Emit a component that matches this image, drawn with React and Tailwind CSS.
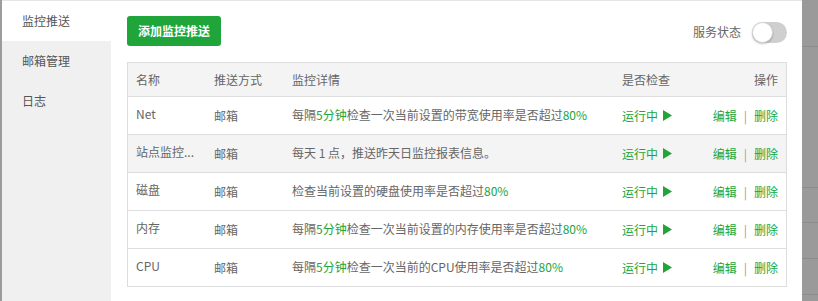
import React, { useState } from "react";

const rows = [
  { name: "Net", detail: [["每隔"], ["5分钟", true], ["检查一次当前设置的带宽使用率是否超过"], ["80%", true]] },
  { name: "站点监控...", detail: [["每天 1 点，推送昨天日监控报表信息。"]], hover: true },
  { name: "磁盘", detail: [["检查当前设置的硬盘使用率是否超过"], ["80%", true]] },
  { name: "内存", detail: [["每隔"], ["5分钟", true], ["检查一次当前设置的内存使用率是否超过"], ["80%", true]] },
  { name: "CPU", detail: [["每隔"], ["5分钟", true], ["检查一次当前的CPU使用率是否超过"], ["80%", true]] },
];

const menu = ["监控推送", "邮箱管理", "日志"];

const Play = () => (
  <svg width="9" height="11" viewBox="0 0 9 11" className="inline-block ml-[5px]">
    <polygon points="0,0 9,5.5 0,11" fill="#20a53a" />
  </svg>
);

const App = () => {
  const [active, setActive] = useState(0);
  const [on, setOn] = useState(false);

  return (
    <div
      className="flex w-[818px] h-[301px] overflow-hidden text-[12px] text-[#666]"
      style={{ fontFamily: '"Noto Sans CJK SC", "Noto Sans", sans-serif' }}
    >
      {/* fondo detras del panel */}
      <div className="w-[2px] bg-[#9c9c9c]" />

      <div className="flex flex-1 bg-white border-t border-[#e6e6e6]">
        {/* menu lateral */}
        <div className="w-[109px] bg-[#f0f0f0] flex flex-col">
          {menu.map((m, i) => (
            <div
              key={m}
              onClick={() => setActive(i)}
              className={
                "h-[40px] flex items-center pl-[20px] text-[#555] cursor-pointer " +
                (i === active ? "bg-white" : "")
              }
            >
              {m}
            </div>
          ))}
        </div>

        {/* contenido */}
        <div className="flex-1 pl-[16px] pr-[15px] pt-[15px]">
          <div className="flex items-center justify-between h-[30px]">
            <button className="h-[30px] px-[11px] bg-[#20a53a] text-white rounded-[3px] font-bold">
              添加监控推送
            </button>
            <div className="flex items-center gap-[11px] mt-[2px]">
              <span className="text-[#666]">服务状态</span>
              <button
                onClick={() => setOn(!on)}
                className={
                  "relative w-[35px] h-[21px] rounded-full " + (on ? "bg-[#20a53a]" : "bg-[#cfcfcf]")
                }
              >
                <span
                  className={
                    "absolute top-[0px] w-[21px] h-[21px] rounded-full bg-white border border-[#d6d6d6] shadow-[0_1px_2px_rgba(0,0,0,0.25)] " +
                    (on ? "right-0" : "left-0")
                  }
                />
              </button>
            </div>
          </div>

          {/* tabla */}
          <div className="mt-[16px] border border-[#dddddd] divide-y divide-[#dddddd]">
            <div className="grid grid-cols-[78px_78px_330px_91px_81px] h-[34px] items-center bg-[#f4f4f4]">
              <div className="pl-[8px]">名称</div>
              <div className="pl-[8px]">推送方式</div>
              <div className="pl-[8px]">监控详情</div>
              <div className="pl-[8px]">是否检查</div>
              <div className="pr-[8px] text-right">操作</div>
            </div>
            {rows.map((r) => (
              <div
                key={r.name}
                className={
                  "grid grid-cols-[78px_78px_330px_91px_81px] h-[38px] last:h-[37px] items-center " +
                  (r.hover ? "bg-[#f4f4f4]" : "")
                }
              >
                <div className="pl-[8px] pb-[3px] truncate">{r.name}</div>
                <div className="pl-[8px]">邮箱</div>
                <div className="pl-[8px] pb-[2px] whitespace-nowrap">
                  {r.detail.map(([t, g], k) => (
                    <span key={k} className={g ? "text-[#20a53a]" : ""}>
                      {t}
                    </span>
                  ))}
                </div>
                <div className="pl-[8px] text-[#20a53a] flex items-center">
                  运行中
                  <Play />
                </div>
                <div className="pr-[8px] flex justify-end items-center text-[#20a53a]">
                  <span>编辑</span>
                  <span className="mx-[7px] text-[#999]">|</span>
                  <span>删除</span>
                </div>
              </div>
            ))}
          </div>
        </div>
      </div>

      {/* fondo derecho */}
      <div className="w-[16px] bg-[#9a9a9a] flex flex-col">
        <div className="h-[47px] border-b border-[#8c8c8c]" />
        <div className="h-[141px] border-b border-[#8c8c8c]" />
        <div className="h-[35px] border-b border-[#8c8c8c]" />
        <div className="h-[36px] border-b border-[#8c8c8c]" />
        <div className="h-[36px] border-b border-[#8c8c8c]" />
      </div>
    </div>
  );
};

export default App;
